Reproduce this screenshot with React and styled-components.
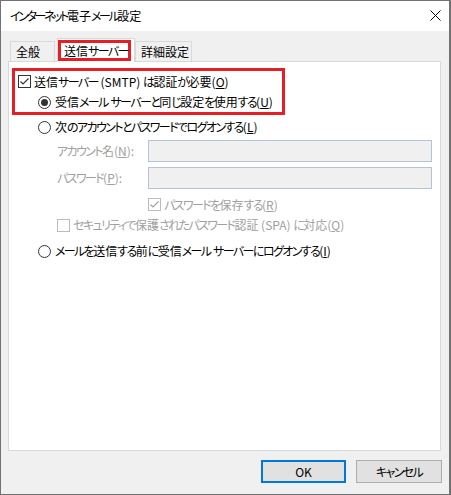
import styled, { createGlobalStyle } from "styled-components"

const GlobalStyle = createGlobalStyle`
    html, body {
        margin: 0;
        padding: 0;
        background: #ffffff;
    }
    body {
        font-family: "Noto Sans CJK JP", "Noto Sans", sans-serif;
        font-size: 12px;
        font-feature-settings: "palt";
        color: #000000;
    }
`

// kana in the dialog font are narrower than in Noto, so tighten them
function Jp({ text }) {
    return text.split(/([\u3040-\u30ff]+)/).map((part, i) =>
        /^[\u3040-\u30ff]+$/.test(part) ? <Kana key={i}>{part}</Kana> : part
    )
}

export default function App() {
    return (
        <>
            <GlobalStyle />
            <Window>
                <TitleBar>
                    <Title><Jp text="インターネット電子メール設定" /></Title>
                    <CloseButton aria-label="閉じる">
                        <svg width="11" height="11" viewBox="0 0 11 11">
                            <path d="M0.5 0.5 L10.5 10.5 M10.5 0.5 L0.5 10.5" stroke="#000" strokeWidth="1" fill="none" />
                        </svg>
                    </CloseButton>
                </TitleBar>
                <Body>
                    <TabStrip>
                        <Tab $width={45}>全般</Tab>
                        <Tab $width={78} $active>
                            <Marked><Jp text="送信サーバー" /></Marked>
                        </Tab>
                        <Tab $width={57}>詳細設定</Tab>
                    </TabStrip>
                    <Panel>
                        <MarkedGroup>
                            <Row $h={21} $indent={3}>
                                <CheckBox checked />
                                <Label><Jp text="送信サーバー (SMTP) は認証が必要" />(<u>O</u>)</Label>
                            </Row>
                            <Row $h={20} $indent={23}>
                                <Radio checked />
                                <Label><Jp text="受信メール サーバーと同じ設定を使用する" />(<u>U</u>)</Label>
                            </Row>
                        </MarkedGroup>
                        <Row $h={24} $indent={29}>
                            <Radio />
                            <Label><Jp text="次のアカウントとパスワードでログオンする" />(<u>L</u>)</Label>
                        </Row>
                        <FieldRow $top={1}>
                            <FieldLabel><Jp text="アカウント名" />(<u>N</u>):</FieldLabel>
                            <TextInput disabled />
                        </FieldRow>
                        <FieldRow $top={5}>
                            <FieldLabel><Jp text="パスワード" />(<u>P</u>):</FieldLabel>
                            <TextInput disabled type="password" />
                        </FieldRow>
                        <Row $h={21} $indent={139} $top={5}>
                            <CheckBox checked disabled />
                            <Label $disabled><Jp text="パスワードを保存する" />(<u>R</u>)</Label>
                        </Row>
                        <Row $h={20} $indent={48}>
                            <CheckBox disabled />
                            <Label $disabled><Jp text="セキュリティで保護されたパスワード認証 (SPA) に対応" />(<u>Q</u>)</Label>
                        </Row>
                        <Row $h={20} $indent={29} $top={6}>
                            <Radio />
                            <Label><Jp text="メールを送信する前に受信メール サーバーにログオンする" />(<u>I</u>)</Label>
                        </Row>
                    </Panel>
                    <Footer>
                        <Button $default $width={85}>OK</Button>
                        <Button $width={86}><Jp text="キャンセル" /></Button>
                    </Footer>
                </Body>
            </Window>
        </>
    )
}

function CheckBox({ checked, disabled }) {
    const mark = disabled ? "#a0a0a0" : "#333333"
    return (
        <Box $disabled={disabled}>
            {checked && (
                <svg width="11" height="11" viewBox="0 0 11 11">
                    <path d="M1.5 5.5 L4 8 L9.5 2.5" stroke={mark} strokeWidth="1.2" fill="none" />
                </svg>
            )}
        </Box>
    )
}

function Radio({ checked }) {
    return <Circle>{checked && <Dot />}</Circle>
}

const Kana = styled.span`
    letter-spacing: -1.6px;
`

const Window = styled.div`
    box-sizing: border-box;
    width: 451px;
    height: 495px;
    border: 1px solid #727272;
    border-right-width: 2px;
    background: #f0f0f0;
    display: flex;
    flex-direction: column;
`

const TitleBar = styled.div`
    height: 30px;
    flex-shrink: 0;
    background: #ffffff;
    display: flex;
    align-items: center;
    justify-content: space-between;
    padding: 0 8px 0 9px;
`

const Title = styled.div`
    font-size: 12px;
    line-height: 16px;
    padding-bottom: 1px;

    ${Kana} {
        letter-spacing: -2.4px;
    }
`

const CloseButton = styled.div`
    display: flex;
    align-items: center;
    justify-content: center;
    width: 11px;
    height: 11px;
    margin-bottom: 2px;
`

const Body = styled.div`
    flex: 1;
    display: flex;
    flex-direction: column;
    padding: 7px 8px 0 7px;
`

const TabStrip = styled.div`
    display: flex;
    align-items: flex-end;
    height: 24px;
    padding-left: 2px;
    position: relative;
    z-index: 1;
    margin-bottom: -1px;
`

const Tab = styled.div`
    box-sizing: border-box;
    width: ${p => p.$width}px;
    height: ${p => (p.$active ? 24 : 21)}px;
    margin-left: ${p => (p.$active ? 2 : 0)}px;
    border: 1px solid #d9d9d9;
    border-bottom: ${p => (p.$active ? "none" : "1px solid #d9d9d9")};
    background: ${p => (p.$active ? "#ffffff" : "#f0f0f0")};
    display: flex;
    align-items: ${p => (p.$active ? "flex-start" : "center")};
    padding: ${p => (p.$active ? "1px 0 0 0" : "0 0 0 5px")};
    line-height: 16px;
    white-space: nowrap;
`

const Marked = styled.span`
    box-sizing: border-box;
    display: flex;
    align-items: center;
    width: 73px;
    height: 21px;
    border: 3px solid #e81e25;
    padding-left: 3px;
`

const Panel = styled.div`
    box-sizing: border-box;
    height: 390px;
    border: 1px solid #d9d9d9;
    background: #ffffff;
    display: flex;
    flex-direction: column;
    padding-top: 6px;
`

const MarkedGroup = styled.div`
    box-sizing: border-box;
    width: 273px;
    height: 47px;
    margin-left: 3px;
    border: 3px solid #e81e25;
`

const Row = styled.div`
    height: ${p => p.$h}px;
    margin-top: ${p => p.$top || 0}px;
    padding-left: ${p => p.$indent}px;
    display: flex;
    align-items: center;
    gap: 4px;
    white-space: nowrap;
`

const Label = styled.span`
    line-height: 16px;
    color: ${p => (p.$disabled ? "#a0a0a0" : "#000000")};
`

const Box = styled.span`
    box-sizing: border-box;
    width: 13px;
    height: 13px;
    flex-shrink: 0;
    border: 1px solid ${p => (p.$disabled ? "#bcbcbc" : "#333333")};
    background: #ffffff;
    display: flex;
    align-items: center;
    justify-content: center;
    margin-right: -1px;
`

const Circle = styled.span`
    box-sizing: border-box;
    width: 13px;
    height: 13px;
    flex-shrink: 0;
    border: 1px solid #333333;
    border-radius: 50%;
    background: #ffffff;
    display: flex;
    align-items: center;
    justify-content: center;
`

const Dot = styled.span`
    width: 7px;
    height: 7px;
    border-radius: 50%;
    background: #333333;
`

const FieldRow = styled.div`
    height: 22px;
    margin-top: ${p => p.$top}px;
    padding-left: 48px;
    display: flex;
    align-items: center;
`

const FieldLabel = styled.span`
    width: 91px;
    line-height: 16px;
    color: #a0a0a0;
    white-space: nowrap;
`

const TextInput = styled.input`
    box-sizing: border-box;
    width: 284px;
    height: 22px;
    margin: 0;
    border: 1px solid #b4c4d6;
    background: #f0f0f0;
    outline: none;
`

const Footer = styled.div`
    display: flex;
    justify-content: flex-end;
    gap: 10px;
    margin-top: 9px;
    margin-right: -1px;
`

const Button = styled.div`
    box-sizing: border-box;
    width: ${p => p.$width}px;
    height: 23px;
    border: ${p => (p.$default ? "2px solid #0078d7" : "1px solid #adadad")};
    background: #e1e1e1;
    display: flex;
    align-items: center;
    justify-content: center;
    line-height: 16px;
`
